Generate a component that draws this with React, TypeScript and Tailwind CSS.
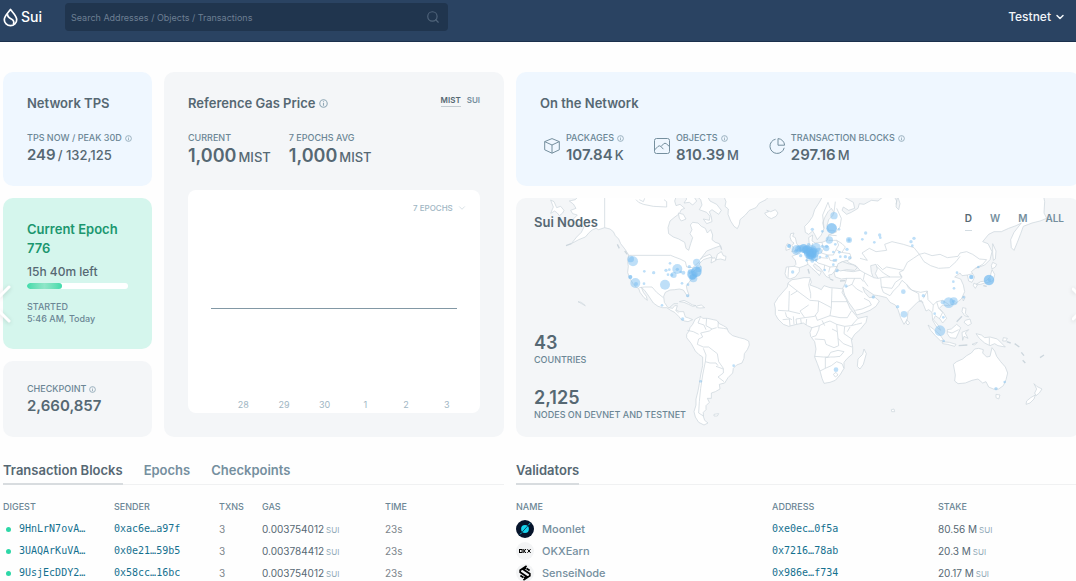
import { useState } from 'react';
import type { ReactNode } from 'react';
import { clsx } from 'clsx';
import { ChevronDown, Search } from 'lucide-react';

const TRANSACTIONS = [
  { digest: '9HnLrN7ovA…', sender: '0xac6e…a97f', txns: 3, gas: '0.003754012', time: '23s' },
  { digest: '3UAQArKuVA…', sender: '0x0e21…59b5', txns: 3, gas: '0.003784412', time: '23s' },
  { digest: '9UsjEcDDY2…', sender: '0x58cc…16bc', txns: 3, gas: '0.003754012', time: '23s' },
];

const VALIDATORS = [
  { name: 'Moonlet', address: '0xe0ec…0f5a', stake: '80.56 M', logo: <MoonletLogo /> },
  { name: 'OKXEarn', address: '0x7216…78ab', stake: '20.3 M', logo: <OkxLogo /> },
  { name: 'SenseiNode', address: '0x986e…f734', stake: '20.17 M', logo: <SenseiLogo /> },
];

const EPOCH_TICKS = ['28', '29', '30', '1', '2', '3'];
const TABS = ['Transaction Blocks', 'Epochs', 'Checkpoints'];
const RANGES = ['D', 'W', 'M', 'ALL'];

// Map units, three per pixel at the card's natural size.
const LAND = [
  // Chukotka
  'M122 15L132 20L140 38L152 34L162 46L158 54L148 62L142 54L134 48L122 55L130 36Z',
  // Alaska, Canada, US, Mexico, Central America
  'M208 0L196 14L178 18L190 27L198 40L182 46L188 56L202 60L190 72L196 84L210 88L222 96L214 112L200 126L184 146L206 134L226 126L238 112L248 104L258 100L266 104L284 98L300 102L310 110L316 122L326 132L332 146L346 164L356 180L353 200L355 214L353 232L359 250L368 264L378 276L386 280L390 292L402 308L412 316L409 304L400 292L394 277L404 286L414 300L422 312L430 324L444 334L458 338L470 338L482 346L494 352L506 364L514 374L524 378L534 380L548 374L536 369L526 366L521 350L508 350L498 345L502 332L494 332L488 340L474 338L463 322L461 304L466 292L480 285L494 284L508 282L520 285L526 294L533 305L537 300L531 284L529 272L540 258L550 246L546 234L558 222L572 216L568 206L580 194L592 190L606 186L603 204L618 196L614 188L608 190L600 178L580 186L570 194L590 168L610 160L632 152L635 164L628 146L616 142L606 134L608 120L602 104L592 114L586 100L574 94L564 84L548 82L541 90L546 104L540 116L548 128L542 146L536 166L528 160L524 142L506 132L490 126L476 116L474 98L480 78L492 68L508 56L514 44L524 40L510 28L498 32L494 18L500 0Z',
  'M505 54L520 58L528 72L514 78L508 70Z',
  // Baffin
  'M556 0L572 14L576 30L568 44L590 52L600 64L598 76L580 72L590 86L606 80L604 66L598 50L606 44L626 58L634 46L620 28L600 18L590 0Z',
  'M524 0L530 12L522 24L538 22L548 30L560 18L548 0Z',
  'M622 178L634 170L640 182L648 184L646 196L632 192L618 194Z',
  // Greenland and Iceland
  'M640 0L648 20L645 34L655 42L654 58L662 78L672 94L682 101L688 88L690 74L706 60L718 46L738 38L748 24L768 14L780 0Z',
  'M764 54L776 50L770 46L782 50L796 44L804 54L798 64L784 71L774 66L768 60Z',
  // Cuba, Hispaniola
  'M508 320L522 316L534 322L548 330L558 332L548 334L536 328L522 322Z',
  'M560 333L574 330L584 338L570 339L560 338Z',
  // South America
  'M548 388L556 372L572 364L578 370L592 370L610 374L620 376L628 386L640 392L650 398L656 412L668 422L688 428L704 432L716 438L718 450L712 464L703 476L702 490L696 504L680 510L670 520L668 534L654 548L644 564L628 568L630 582L616 590L604 594L604 610L592 610L598 622L588 632L588 644L580 652L580 664L584 676L594 684L582 690L566 682L556 666L552 650L558 630L558 612L564 588L568 566L572 540L578 512L578 486L566 478L556 468L544 446L530 428L530 418L537 408L540 398Z',
  'M612 658L626 656L622 663L612 663Z',
  // Eurasia
  'M830 248L825 236L829 216L852 214L858 208L856 196L846 184L860 178L874 166L886 158L898 150L896 128L908 120L906 138L916 144L936 142L952 136L956 120L972 114L980 110L968 106L956 106L951 92L956 74L968 62L972 52L964 40L954 50L944 68L938 84L942 100L934 120L922 134L914 118L908 108L896 118L886 112L884 94L896 82L908 64L914 44L928 22L940 0L990 0L1030 22L1034 40L1016 46L1000 36L996 46L1010 58L1024 52L1044 40L1048 26L1062 28L1084 16L1104 18L1116 8L1150 0L1160 18L1158 36L1166 44L1170 26L1162 0L1600 0L1604 20L1602 54L1610 70L1590 78L1566 84L1540 94L1532 116L1522 142L1512 166L1504 158L1502 134L1512 112L1534 84L1518 92L1496 100L1474 110L1452 110L1436 118L1418 140L1434 146L1446 170L1440 194L1424 210L1408 216L1396 220L1384 230L1394 246L1386 262L1376 258L1372 240L1356 242L1350 234L1334 246L1352 252L1360 270L1364 290L1354 312L1338 324L1316 332L1298 330L1288 340L1302 356L1310 370L1298 384L1290 372L1276 362L1270 374L1284 390L1292 406L1280 396L1268 376L1266 352L1256 344L1248 348L1240 328L1234 316L1222 322L1208 336L1194 350L1192 372L1182 388L1172 368L1164 344L1156 330L1140 322L1130 308L1106 302L1092 300L1080 292L1058 276L1064 292L1078 308L1094 306L1108 318L1098 334L1080 346L1060 354L1040 360L1032 344L1016 322L1004 300L998 280L1006 264L1010 250L994 252L976 246L972 232L990 224L1010 228L1030 230L1050 226L1038 212L1018 204L1010 196L992 202L980 216L974 228L966 238L956 240L960 250L948 244L940 232L930 218L914 206L910 212L920 224L934 230L928 242L922 234L906 220L894 208L880 214L868 218L868 230L856 246L840 252Z',
  // Great Britain, Ireland
  'M842 116L852 114L848 124L856 128L860 146L868 156L862 166L844 170L852 160L846 152L852 144L844 138L840 126Z',
  'M832 146L842 150L840 162L828 166L828 154Z',
  // Africa
  'M834 264L846 254L862 252L882 248L900 248L904 262L900 270L922 278L934 284L942 272L960 278L984 280L1000 282L996 292L1008 312L1020 340L1038 362L1044 370L1072 364L1068 382L1050 404L1034 418L1024 434L1028 456L1028 476L1012 490L1002 502L1002 520L990 540L976 556L960 562L942 565L936 550L930 528L922 506L914 486L918 462L914 440L902 424L900 412L906 398L892 392L880 384L860 388L836 394L820 388L804 372L796 358L796 340L793 326L804 308L816 294L832 276Z',
  'M1062 462L1069 476L1060 508L1050 522L1042 514L1044 492L1058 478Z',
  // Sri Lanka, Taiwan
  'M1190 374L1199 384L1194 390L1188 384Z',
  'M1362 302L1366 306L1360 318L1358 310Z',
  // Japan
  'M1444 212L1448 202L1460 208L1456 216L1446 222Z',
  'M1446 224L1454 238L1450 256L1436 262L1424 264L1412 268L1398 268L1412 260L1428 258L1440 246Z',
  'M1392 264L1402 270L1396 280L1390 272Z',
  'M1448 146L1458 168L1456 192L1450 196L1448 174Z',
  // Indonesia, Philippines, New Guinea
  'M1254 390L1270 402L1290 420L1300 434L1292 438L1276 422L1262 406Z',
  'M1296 440L1318 442L1338 448L1334 454L1312 448L1298 446Z',
  'M1312 404L1324 402L1340 388L1352 398L1346 412L1338 430L1320 428L1312 416Z',
  'M1356 412L1376 404L1366 414L1374 430L1362 424L1358 436Z',
  'M1358 338L1368 340L1366 356L1376 366L1364 362L1356 350Z',
  'M1366 376L1380 372L1384 386L1374 392L1362 382Z',
  'M1386 448L1402 442L1394 450Z',
  'M1398 416L1414 420L1424 428L1440 426L1462 432L1474 444L1486 456L1464 452L1454 446L1440 452L1424 444L1408 430Z',
  'M1480 428L1492 430L1488 438L1478 438Z',
  // Australia
  'M1330 508L1340 500L1358 492L1370 482L1384 474L1394 462L1406 460L1420 464L1418 474L1430 486L1440 484L1446 458L1454 468L1460 484L1472 500L1486 516L1493 534L1488 554L1480 572L1466 582L1450 582L1436 576L1428 560L1418 564L1404 552L1386 556L1366 564L1344 566L1334 558L1336 540Z',
  'M1458 598L1470 600L1466 612L1458 608Z',
  // New Zealand
  'M1572 566L1580 574L1596 582L1588 594L1578 602L1574 594L1580 582Z',
  'M1576 600L1572 612L1560 624L1548 628L1550 618L1562 608Z',
  'M1144 644L1152 642L1154 650L1145 650Z',
  'M204 320L214 322L226 332L218 328Z',
];

const SEAS = [
  'M984 206L998 200L1014 206L1030 210L1042 218L1034 226L1010 224L990 228L980 220Z',
  'M1082 212L1098 208L1102 222L1096 236L1104 250L1090 248L1084 232Z',
];

const BORDERS = [
  'M284 0V98M356 181H482L494 186L510 192L526 200L530 216L548 218L568 200M388 278L404 276L426 276L440 292L460 308',
  'M478 338L492 326L504 326M496 346L506 354M430 34L400 28L386 22L378 14M430 34L470 36L470 20L462 14M404 10L400 20L388 14',
  'M590 370L588 392L606 402L598 408L572 414L578 426L566 432L562 448L580 456L596 456L622 476L626 500L640 520L640 534L624 546L642 560M572 364L564 384L582 390L588 404M532 406L550 410L566 418M580 460L588 480L586 500L600 504L618 504L624 512M586 500L578 540L572 580L568 620L566 654L582 664M625 380L624 398L640 400L652 402M618 514L640 522M606 402L620 398',
  'M834 266L862 288L900 316L926 318M838 288L836 348L804 346M862 288L842 300M900 252L896 270L902 296L902 310M926 318L964 338L966 280M964 320H1012M926 318L924 350L914 364L884 368L870 348L896 330M964 338L960 362L922 376L916 360M836 348L870 356M860 388L858 372L884 368M840 392L838 372L818 374M960 362L990 368L1012 368L1024 348M906 398L928 392L948 382L960 378L980 388L1004 394L1024 392L1044 370M928 392L926 404L918 422L906 426M980 388L982 410L984 430L986 452L972 458L948 448L944 434L914 432M1004 394L1002 416L1028 434M984 430L1000 446L1026 456M914 484L940 486L954 486L962 472L984 466L1002 470L990 484L972 486L962 486L946 488L946 520L930 528M946 520L964 512L980 500L996 506L1002 520M982 410L966 402M1024 392L1040 388L1056 384M970 538L978 532L984 540L976 546ZM850 364L852 388M826 352L830 366L846 374M872 372L874 386M890 372L888 390M936 376L944 392M1012 410L1020 396',
  'M942 100L938 60L954 22L960 40M972 52L976 20M980 108L990 96L994 70L980 40M956 136L980 136L986 150L978 164L994 172L1020 176L1024 190L1010 198M936 142L940 162L934 174L954 180L960 196L980 200M874 166L892 174L890 196L894 208M908 144L904 162L892 174M890 196L916 196L934 188L954 190M916 196L924 204L944 210L942 226M960 216L982 214M944 210L960 216L956 232M978 164L970 180L954 180M852 214L868 218M836 216L834 248M956 120L980 122M980 136L996 146L1006 156L996 172',
  'M1050 226L1064 234L1088 246M1050 190L1072 196L1056 174L1078 160L1098 170L1130 166L1124 148L1146 140L1180 148L1212 158L1228 178L1210 190L1192 202L1180 226L1160 222L1130 216L1118 224L1102 208M1228 178L1244 174L1266 182L1290 178L1312 188L1344 184L1350 174L1370 170L1388 178L1408 192L1430 194L1418 208L1396 220M1228 178L1242 200L1262 212L1286 220L1318 218L1338 200L1350 184M1064 234L1060 254L1074 274M1104 250L1126 246L1152 246L1176 246L1168 232L1180 226M1112 250L1114 276L1120 292L1140 302M1114 276L1146 280L1156 262L1176 248L1168 236M1140 302L1150 288L1166 272L1176 256L1190 268L1206 286L1232 292L1252 288L1240 310M1190 268L1196 280L1226 296M1252 288L1254 314L1270 330L1280 320L1298 316L1318 330M1270 330L1268 350M1280 320L1286 340L1298 352L1288 372M1226 296L1228 318L1240 322M1010 250L1034 250L1052 250L1060 260M1034 250L1026 268L1008 276M1026 268L1040 282L1058 292M1036 346L1056 342L1084 330L1078 318L1062 310M1100 214L1120 234L1140 246M1372 240L1388 236M1438 428V450M1312 410L1326 414L1346 404M1162 9L1158 28',
];

// Detached island chains, drawn as strokes only.
const ISLANDS = 'M184 146L168 152M344 168L352 178M322 148L328 160M894 222L898 236M990 258L1006 257M960 252L970 256M1340 380L1356 364M1346 452L1372 450M1534 472L1542 482M1538 496L1546 504M1590 488L1602 480M1490 440L1502 444M1514 446L1528 456M1430 274L1420 272';

const NODES: [number, number, number][] = [
  [369, 199, 15], [362, 192, 10], [361, 246, 6], [361, 246, 6], [376, 264, 15], [378, 267, 6], [403, 229, 4], [431, 233, 5], [402, 266, 4],
  [465, 269, 15], [480, 205, 4], [468, 226, 5], [478, 224, 4], [474, 239, 4], [485, 240, 5], [491, 240, 9], [502, 222, 15],
  [502, 223, 5], [520, 233, 6], [512, 231, 4], [538, 215, 5], [560, 202, 11], [559, 230, 16], [559, 230, 15], [547, 238, 16], [547, 240, 13],
  [550, 250, 12], [548, 245, 9], [566, 221, 10], [540, 230, 7], [534, 269, 4], [516, 265, 4], [533, 302, 5], [456, 331, 4], [518, 372, 5],
  [671, 512, 4], [572, 559, 4], [837, 153, 6], [837, 153, 5], [848, 231, 5], [860, 165, 15], [858, 168, 6], [864, 162, 9], [872, 182, 5],
  [880, 160, 13], [882, 161, 13], [888, 164, 12], [892, 165, 14], [896, 170, 15], [898, 176, 16], [904, 178, 15], [904, 170, 15],
  [905, 182, 13], [912, 174, 15], [905, 166, 16], [918, 158, 14], [902, 178, 9], [914, 186, 11], [900, 182, 12], [908, 174, 13],
  [885, 162, 8], [870, 160, 10], [896, 150, 6], [926, 168, 10], [890, 196, 4], [907, 197, 6], [918, 196, 4], [930, 186, 4],
  [937, 154, 5], [949, 160, 9], [950, 154, 5], [972, 62, 11], [965, 100, 16], [965, 100, 15], [987, 103, 4], [907, 103, 5], [937, 109, 4],
  [958, 135, 11], [976, 148, 4], [970, 171, 4], [988, 172, 4], [991, 185, 4], [1006, 185, 5], [1019, 188, 5], [1011, 163, 5],
  [972, 196, 4], [978, 195, 4], [970, 209, 4], [944, 225, 4], [981, 227, 5], [950, 184, 4], [1017, 135, 9], [1017, 135, 5],
  [1057, 133, 4], [1067, 114, 5], [1093, 142, 4], [1109, 120, 5], [1111, 128, 4], [1203, 140, 5], [1212, 130, 5], [1207, 152, 4],
  [1008, 273, 5], [1090, 306, 5], [1180, 290, 7], [1163, 335, 5], [1182, 358, 10], [1240, 302, 5], [1330, 260, 4], [1332, 280, 4],
  [1341, 233, 4], [1384, 246, 7], [1384, 246, 6], [1405, 216, 4], [1437, 255, 16], [1437, 255, 15], [1438, 255, 5], [1361, 307, 4],
  [1316, 323, 16], [1331, 319, 12], [1331, 319, 5], [1298, 322, 6], [1274, 356, 4], [1300, 367, 4], [1290, 407, 16], [1301, 438, 4],
  [978, 524, 7], [1458, 581, 5], [1484, 561, 4],
];

function InfoIcon({ className }: { className?: string }) {
  return (
    <svg viewBox="0 0 8 8" className={clsx('shrink-0 fill-none stroke-[#91a9b7]', className ?? 'size-[7px]')} aria-hidden="true">
      <circle cx="4" cy="4" r="3.3" strokeWidth="1" />
      <path d="M4 3.6V6M4 2V2.8" strokeWidth="1" />
    </svg>
  );
}

function SuiLogo() {
  return (
    <svg viewBox="0 0 15 19" className="h-[19px] w-[15px] fill-none stroke-white stroke-[1.7]" aria-hidden="true">
      <path d="M7.5 1.4C5.6 4.4 1.3 7.6 1.3 11.7a6.2 6 0 0 0 12.4 0C13.7 7.6 9.4 4.4 7.5 1.4Z" strokeLinejoin="round" />
      <path d="M4.6 6.2C4.2 9.2 6.4 10.1 8.4 11C10.4 12 11.4 13.8 10.4 16.4" />
    </svg>
  );
}

function MoonletLogo() {
  return (
    <svg viewBox="0 0 18 18" className="size-[18px]" aria-hidden="true">
      <circle cx="9" cy="9" r="9" fill="#06142b" />
      <circle cx="9" cy="9" r="3.9" fill="#16d3ee" />
      <path d="M4.2 14.2L13.9 3.6" stroke="#06142b" strokeWidth="0.7" />
      <path d="M4 14.4L5.8 12.6M12.4 5.2L14 3.2" stroke="#16d3ee" strokeWidth="0.9" />
    </svg>
  );
}

function OkxLogo() {
  return (
    <span className="flex size-[18px] items-center justify-center rounded-full bg-[#f3f4f5]">
      <svg viewBox="0 0 12 4" className="h-1 w-3 fill-none stroke-black" aria-hidden="true">
        <rect x="0.5" y="0.5" width="2.6" height="3" />
        <path d="M4.8 0V4M7 0L5.2 2L7 4M8.4 0.2L11.6 3.8M11.6 0.2L8.4 3.8" />
      </svg>
    </span>
  );
}

function SenseiLogo() {
  return (
    <span className="flex size-[18px] items-center justify-center rounded-full bg-[#f3f4f5]">
      <svg viewBox="0 0 14 16" className="h-4 w-[14px] fill-none stroke-black stroke-[1.8]" aria-hidden="true">
        <path d="M8.6 1L2.2 5.2V7.2L8.6 11.4L5.8 13.2M5.4 15L11.8 10.8V8.8L5.4 4.6L8.2 2.8" />
        <path d="M11.6 5.6L8.6 3.6M2.4 10.4L5.4 12.4" />
      </svg>
    </span>
  );
}

function PackagesIcon() {
  return (
    <svg viewBox="0 0 18 18" className="size-[18px] fill-none stroke-[#758f9e]" aria-hidden="true">
      <path d="M9 1.6L16.3 4.6V12.8L9 16.2L1.7 12.8V4.6ZM1.7 4.6L9 8L16.3 4.6M9 8V16.2" strokeLinejoin="round" />
    </svg>
  );
}

function ObjectsIcon() {
  return (
    <svg viewBox="0 0 18 18" className="size-[18px] fill-none stroke-[#758f9e]" aria-hidden="true">
      <rect x="1.5" y="1.5" width="15" height="15" rx="2" />
      <path d="M1.5 13L5 9.4Q6.4 8.2 7.8 9.4L10.4 12.2M8 9.6L10.6 6.8Q12 5.6 13.4 6.8L16.5 9.6" />
    </svg>
  );
}

function BlocksIcon() {
  return (
    <svg viewBox="0 0 18 18" className="size-[18px] fill-none stroke-[#758f9e]" aria-hidden="true">
      <path d="M7.6 2.2A7.2 7.2 0 1 0 16.2 10.8" />
      <path d="M10 1.6V8.2H16.6A7 7 0 0 0 10 1.6Z" strokeLinejoin="round" />
    </svg>
  );
}

function Label({ children, info }: { children: ReactNode; info?: boolean }) {
  return (
    <p className="flex items-center gap-[3px] whitespace-nowrap text-[9px] leading-3 font-medium text-[#6b8695]">
      {children}
      {info && <InfoIcon />}
    </p>
  );
}

function Title({ children }: { children: ReactNode }) {
  return <h2 className="text-[13px] leading-4 font-semibold text-[#566873]">{children}</h2>;
}

function GasStat({ label, value }: { label: string; value: string }) {
  return (
    <div>
      <Label>{label}</Label>
      <p className="flex items-baseline gap-[2px] text-lg leading-6 font-semibold text-[#566873]">
        {value}
        <span className="text-[13px] font-medium">MIST</span>
      </p>
    </div>
  );
}

function NetworkStat({ icon, label, value, unit }: { icon: ReactNode; label: string; value: string; unit: string }) {
  return (
    <div className="flex items-start">
      <div className="mt-[5px] flex w-[26px] justify-center pr-[2px]">{icon}</div>
      <div>
        <Label info>{label}</Label>
        <p className="flex items-baseline gap-[2px] text-[15px] leading-[22px] font-semibold text-[#566873]">
          {value}
          <span className="text-[13px] font-medium">{unit}</span>
        </p>
      </div>
    </div>
  );
}

function WorldMap() {
  return (
    <svg viewBox="18 9 1692 717" preserveAspectRatio="xMinYMin slice" className="absolute inset-0 size-full" aria-hidden="true">
      <g stroke="#ccd6dd" strokeWidth="2.2" strokeLinejoin="round">
        {LAND.map((d) => (
          <path key={d} d={d} fill="#ffffff" />
        ))}
        {SEAS.map((d) => (
          <path key={d} d={d} fill="#f4f6f8" />
        ))}
        {BORDERS.map((d) => (
          <path key={d} d={d} fill="none" />
        ))}
        <path d={ISLANDS} fill="none" strokeWidth="4" />
      </g>
      <g fill="#6fb9f0" fillOpacity="0.45">
        {NODES.map(([x, y, r], i) => (
          <circle key={i} cx={x} cy={y} r={r} />
        ))}
      </g>
    </svg>
  );
}

function Header() {
  return (
    <header className="flex h-[42px] items-start border-b border-[#1b304c] bg-[#2a4362] pt-[3px] pr-[10px] pl-[3px] text-white">
      <a href="#home" className="flex h-7 w-[62px] items-center gap-[3px]">
        <SuiLogo />
        <span className="text-sm leading-4 font-medium">Sui</span>
      </a>
      <div className="relative w-[383px]">
        <input
          type="text"
          aria-label="Search"
          placeholder="Search Addresses / Objects / Transactions"
          className="block h-7 w-full rounded-sm bg-[#20354e] pr-8 pl-[6px] text-[9px] text-white outline-none placeholder:text-[#6d7f93]"
        />
        <Search className="absolute top-[7px] right-2 size-[14px] text-[#50647b]" aria-hidden="true" />
      </div>
      <button type="button" className="ml-auto flex h-7 items-center gap-[3px] text-xs font-medium text-[#f1f5f9]">
        Testnet
        <ChevronDown className="size-3 stroke-3" />
      </button>
    </header>
  );
}

function GasPriceCard() {
  const [unit, setUnit] = useState('MIST');
  return (
    <section className="flex flex-col rounded-[10px] bg-[#f4f6f8] px-6 pt-[23px] pb-6">
      <div className="flex items-start justify-between">
        <div className="flex items-center gap-1">
          <Title>Reference Gas Price</Title>
          <InfoIcon className="size-[9px]" />
        </div>
        <div className="flex gap-[6px] text-[8px] leading-[10px] font-semibold">
          {['MIST', 'SUI'].map((u) => (
            <button
              key={u}
              type="button"
              onClick={() => setUnit(u)}
              className={clsx('border-b pb-px', u === unit ? 'border-[#c3ccd2] text-[#566873]' : 'border-transparent text-[#758f9e]')}
            >
              {u}
            </button>
          ))}
        </div>
      </div>
      <div className="mt-[21px] flex gap-[18px]">
        <GasStat label="CURRENT" value="1,000" />
        <GasStat label="7 EPOCHS AVG" value="1,000" />
      </div>
      <div className="mt-[21px] flex flex-1 flex-col rounded-lg bg-white px-[23px] pt-3 pb-[2px]">
        <div className="mb-1 -mr-[10px] flex items-center justify-end gap-1">
          <select aria-label="Epoch range" className="appearance-none bg-transparent text-[8px] leading-3 font-medium text-[#a0b6c3] outline-none">
            <option>7 EPOCHS</option>
          </select>
          <ChevronDown className="size-[10px] stroke-1 text-[#a0b6c3]" aria-hidden="true" />
        </div>
        <div className="flex flex-1 items-center">
          <svg viewBox="0 0 246 1" preserveAspectRatio="none" className="h-px w-full" aria-hidden="true">
            <path d="M0 0.5H246" stroke="#8298a5" strokeWidth="1" />
          </svg>
        </div>
        <ul className="ml-3 -mr-[10px] grid grid-cols-6 text-center text-[9px] leading-3 text-[#a0b6c3]">
          {EPOCH_TICKS.map((tick) => (
            <li key={tick}>{tick}</li>
          ))}
        </ul>
      </div>
    </section>
  );
}

function NodesCard() {
  const [range, setRange] = useState('D');
  return (
    <section className="relative flex flex-1 flex-col overflow-hidden rounded-[10px] bg-[#f4f6f8] px-[18px] pt-3 pb-4">
      <WorldMap />
      <div className="relative -mr-[2px] flex flex-1 items-start justify-between">
        <div className="pt-1">
          <Title>Sui Nodes</Title>
        </div>
        <div className="flex gap-[18px] text-[10px] leading-4 font-semibold">
          {RANGES.map((r) => (
            <button
              key={r}
              type="button"
              onClick={() => setRange(r)}
              className={clsx('border-b pb-1', r === range ? 'border-[#d3dce2] text-[#566873]' : 'border-transparent text-[#758f9e]')}
            >
              {r}
            </button>
          ))}
        </div>
      </div>
      <div className="relative">
        <p className="text-lg leading-[22px] font-semibold text-[#566873]">43</p>
        <Label>COUNTRIES</Label>
      </div>
      <div className="relative mt-[21px]">
        <p className="text-lg leading-[22px] font-semibold text-[#566873]">2,125</p>
        <Label>NODES ON DEVNET AND TESTNET</Label>
      </div>
    </section>
  );
}

function TransactionsPanel() {
  const [tab, setTab] = useState(TABS[0]);
  return (
    <section>
      <div className="flex gap-[21px] border-b border-[#f0f1f2]">
        {TABS.map((t) => (
          <button
            key={t}
            type="button"
            onClick={() => setTab(t)}
            className={clsx(
              '-mb-px border-b-2 pb-[3px] text-[13px] leading-5 font-semibold whitespace-nowrap',
              t === tab ? 'border-[#d8dcdf] text-[#566873]' : 'border-transparent text-[#758f9e]',
            )}
          >
            {t}
          </button>
        ))}
      </div>
      <table className="mt-[11px] w-full table-fixed text-left leading-4">
        <thead>
          <tr className="h-[22px] text-[9px] text-[#6b8695]">
            <th className="w-[111px] font-medium">DIGEST</th>
            <th className="w-[105px] font-medium">SENDER</th>
            <th className="w-[43px] font-medium">TXNS</th>
            <th className="w-[123px] font-medium">GAS</th>
            <th className="font-medium">TIME</th>
          </tr>
        </thead>
        <tbody className="text-[10px] whitespace-nowrap text-[#7c858c]">
          {TRANSACTIONS.map((tx) => (
            <tr key={tx.digest} className="h-[22px]">
              <td>
                <div className="flex items-center gap-2 pl-[3px]">
                  <span className="size-[5px] rounded-full bg-[#2dd7a7]" />
                  <HashLink>{tx.digest}</HashLink>
                </div>
              </td>
              <td>
                <HashLink>{tx.sender}</HashLink>
              </td>
              <td>{tx.txns}</td>
              <td>
                <Amount value={tx.gas} />
              </td>
              <td>{tx.time}</td>
            </tr>
          ))}
        </tbody>
      </table>
    </section>
  );
}

function HashLink({ children }: { children: string }) {
  return (
    <a href={`#${children}`} className="block font-['DejaVu_Sans_Mono',monospace] text-[10px] leading-4 text-[#14708f]">
      {children}
    </a>
  );
}

function Amount({ value }: { value: string }) {
  return (
    <span className="flex items-baseline gap-[2px] text-[10px] leading-4 text-[#566873]">
      {value}
      <span className="text-[8px] text-[#91a9b7]">SUI</span>
    </span>
  );
}

function ValidatorsPanel() {
  return (
    <section>
      <div className="flex border-b border-[#f0f1f2]">
        <h2 className="-mb-px border-b-2 border-[#d8dcdf] pb-[3px] text-[13px] leading-5 font-semibold text-[#566873]">Validators</h2>
      </div>
      <table className="mt-[11px] w-full table-fixed text-left leading-4">
        <thead>
          <tr className="h-[22px] text-[9px] text-[#6b8695]">
            <th className="w-[256px] font-medium">NAME</th>
            <th className="w-[166px] font-medium">ADDRESS</th>
            <th className="font-medium">STAKE</th>
          </tr>
        </thead>
        <tbody className="whitespace-nowrap">
          {VALIDATORS.map((v) => (
            <tr key={v.name} className="h-[22px]">
              <td>
                <a href={`#${v.name}`} className="flex items-center gap-2 text-[11px] leading-4 font-medium text-[#758f9e]">
                  {v.logo}
                  {v.name}
                </a>
              </td>
              <td>
                <HashLink>{v.address}</HashLink>
              </td>
              <td>
                <Amount value={v.stake} />
              </td>
            </tr>
          ))}
        </tbody>
      </table>
    </section>
  );
}

function CarouselArrow({ side }: { side: 'left' | 'right' }) {
  return (
    <button
      type="button"
      aria-label={side === 'left' ? 'Previous' : 'Next'}
      className={clsx('absolute top-[283px]', side === 'left' ? 'left-0' : 'right-0')}
    >
      <svg
        viewBox={side === 'left' ? '0 0 12 42' : '0 0 4 42'}
        className={clsx('h-[42px] fill-none stroke-white stroke-[3] drop-shadow-sm', side === 'left' ? 'w-3' : 'w-1')}
      >
        <path d={side === 'left' ? 'M9 4L-8 21L9 38' : 'M1 6L16 21L1 36'} strokeLinecap="round" />
      </svg>
    </button>
  );
}

export default function App() {
  return (
    <div className="relative h-screen overflow-hidden bg-[#fefefe] font-[Inter,sans-serif]">
      <Header />
      <main className="-mr-1 pt-[30px] pl-[3px]">
        <div className="grid grid-cols-[501fr_564fr] gap-3">
          <div className="grid grid-cols-[149px_1fr] gap-3">
            <div className="flex flex-col gap-3">
              <section className="rounded-[10px] bg-[#eff7ff] px-6 pt-[23px] pb-5">
                <Title>Network TPS</Title>
                <div className="mt-[21px]">
                  <Label info>TPS NOW / PEAK 30D</Label>
                  <p className="flex items-baseline gap-[2px] text-[15px] leading-[22px] font-semibold whitespace-nowrap text-[#566873]">
                    249
                    <span className="text-[13px] font-medium">/ 132,125</span>
                  </p>
                </div>
              </section>
              <section className="rounded-[10px] bg-[#d5f6ed] px-6 pt-[22px] pb-6">
                <h2 className="text-[13px] leading-[19px] font-semibold text-[#1b976f]">
                  Current Epoch
                  <br />
                  776
                </h2>
                <p className="mt-[6px] text-xs leading-4 font-medium text-[#566873]">15h 40m left</p>
                <div className="mt-[3px] h-[6px] overflow-hidden rounded-full bg-white">
                  <div className="h-full w-[35%] rounded-full bg-linear-to-r from-[#3fdbab] via-[#8fe6c8] to-[#3fdbab]" />
                </div>
                <div className="mt-3">
                  <Label>STARTED</Label>
                  <Label>5:46 AM, Today</Label>
                </div>
              </section>
              <section className="rounded-[10px] bg-[#f4f6f8] px-6 pt-[22px] pb-5">
                <Label info>CHECKPOINT</Label>
                <p className="text-[15px] leading-[22px] font-semibold text-[#566873]">2,660,857</p>
              </section>
            </div>
            <GasPriceCard />
          </div>
          <div className="flex flex-col gap-3">
            <section className="rounded-[10px] bg-[#eff7ff] px-6 pt-[23px] pb-5">
              <Title>On the Network</Title>
              <div className="mt-[21px] flex gap-[26px]">
                <NetworkStat icon={<PackagesIcon />} label="PACKAGES" value="107.84" unit="K" />
                <NetworkStat icon={<ObjectsIcon />} label="OBJECTS" value="810.39" unit="M" />
                <NetworkStat icon={<BlocksIcon />} label="TRANSACTION BLOCKS" value="297.16" unit="M" />
              </div>
            </section>
            <NodesCard />
          </div>
        </div>
        <div className="mt-[23px] grid grid-cols-[501fr_564fr] gap-3">
          <TransactionsPanel />
          <ValidatorsPanel />
        </div>
      </main>
      <CarouselArrow side="left" />
      <CarouselArrow side="right" />
    </div>
  );
}
